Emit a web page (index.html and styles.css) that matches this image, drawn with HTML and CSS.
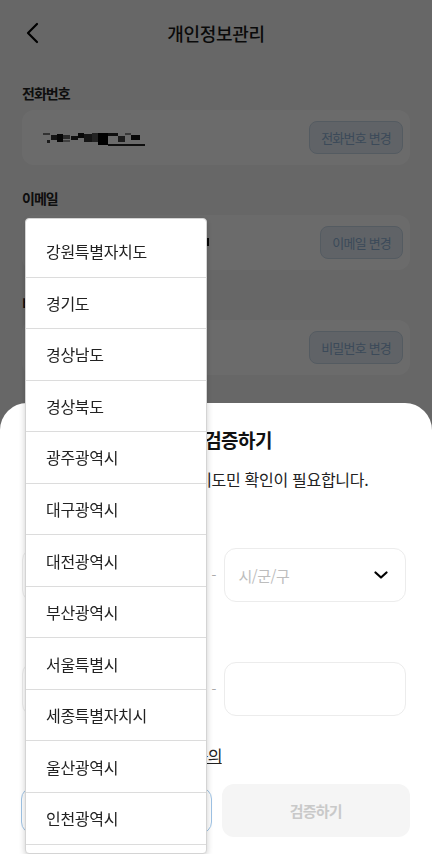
FILE: index.html
```html
<!DOCTYPE html>
<html lang="ko">
<head>
    <meta charset="UTF-8">
    <meta name="viewport" content="width=device-width, initial-scale=1.0">
    <title>개인정보관리</title>
    <link rel="stylesheet" href="styles.css">
</head>
<body>
    <div class="page">
        <header class="topbar">
            <svg class="back" width="14" height="22" viewBox="0 0 14 22"><path d="M11 2 L2 11 L11 20" fill="none" stroke="#000" stroke-width="2.2" stroke-linecap="round" stroke-linejoin="round"/></svg>
            <h1>개인정보관리</h1>
        </header>

        <section class="field">
            <div class="field-label">전화번호</div>
            <div class="card">
                <svg class="masked" width="104" height="16" viewBox="0 0 104 16">
                    <rect x="0" y="3" width="7" height="2" fill="#777"/>
                    <rect x="4" y="10" width="3" height="3" fill="#444"/>
                    <rect x="8" y="5" width="6" height="5" fill="#333"/>
                    <rect x="14" y="4" width="6" height="8" fill="#111"/>
                    <rect x="20" y="5" width="7" height="4" fill="#666"/>
                    <rect x="20" y="10" width="7" height="2" fill="#999"/>
                    <rect x="28" y="6" width="7" height="4" fill="#222"/>
                    <rect x="35" y="3" width="6" height="5" fill="#111"/>
                    <rect x="41" y="4" width="8" height="8" fill="#333"/>
                    <rect x="49" y="3" width="6" height="9" fill="#555"/>
                    <rect x="55" y="3" width="10" height="12" fill="#000"/>
                    <rect x="65" y="3" width="10" height="3" fill="#222"/>
                    <rect x="75" y="6" width="7" height="6" fill="#444"/>
                    <rect x="82" y="3" width="6" height="2" fill="#888"/>
                    <rect x="88" y="5" width="9" height="5" fill="#111"/>
                    <rect x="65" y="14" width="37" height="2" fill="#222"/>
                </svg>
                <button class="change-btn">전화번호 변경</button>
            </div>
        </section>

        <section class="field">
            <div class="field-label">이메일</div>
            <div class="card">
                <svg class="masked" width="168" height="16" viewBox="0 0 168 16">
                    <rect x="0" y="4" width="150" height="8" fill="#555"/>
                    <rect x="164" y="3" width="2" height="8" fill="#111"/>
                </svg>
                <button class="change-btn">이메일 변경</button>
            </div>
        </section>

        <section class="field">
            <div class="field-label">비밀번호</div>
            <div class="card">
                <span class="card-value">••••••••</span>
                <button class="change-btn">비밀번호 변경</button>
            </div>
        </section>
    </div>

    <div class="dim"></div>

    <div class="sheet">
        <h2 class="sheet-title">경기도민 거주지역주소 검증하기</h2>
        <p class="sheet-desc">서비스 이용을 위해서는 경기도민 확인이 필요합니다.</p>

        <div class="form-label">거주지</div>
        <div class="form-row">
            <div class="select">
                <span class="placeholder">시/도</span>
                <svg width="14" height="8" viewBox="0 0 14 8"><path d="M1.5 1.5 L7 6.5 L12.5 1.5" fill="none" stroke="#000" stroke-width="2.2" stroke-linecap="round" stroke-linejoin="round"/></svg>
            </div>
            <span class="dash">-</span>
            <div class="select">
                <span class="placeholder">시/군/구</span>
                <svg width="14" height="8" viewBox="0 0 14 8"><path d="M1.5 1.5 L7 6.5 L12.5 1.5" fill="none" stroke="#000" stroke-width="2.2" stroke-linecap="round" stroke-linejoin="round"/></svg>
            </div>
        </div>

        <div class="form-label">생년월일</div>
        <div class="form-row">
            <div class="select"><span class="placeholder">앞 6자리</span></div>
            <span class="dash">-</span>
            <div class="select"></div>
        </div>

        <a class="terms">개인정보 수집 및 이용약관 동의</a>

        <div class="actions">
            <button class="btn-cancel">취소</button>
            <button class="btn-submit" disabled>검증하기</button>
        </div>
    </div>

    <ul class="picker">
        <li>강원특별자치도</li>
        <li>경기도</li>
        <li>경상남도</li>
        <li>경상북도</li>
        <li>광주광역시</li>
        <li>대구광역시</li>
        <li>대전광역시</li>
        <li>부산광역시</li>
        <li>서울특별시</li>
        <li>세종특별자치시</li>
        <li>울산광역시</li>
        <li>인천광역시</li>
        <li>전라남도</li>
    </ul>
</body>
</html>
```

FILE: styles.css
```css
* {
    box-sizing: border-box;
}

body {
    margin: 0;
    width: 432px;
    height: 854px;
    overflow: hidden;
    font-family: "Noto Sans CJK KR", sans-serif;
    background-color: #f5f5f5;
    color: #222;
}

.page {
    padding: 0 22px;
}

.topbar {
    height: 66px;
    display: flex;
    align-items: center;
    justify-content: center;
    position: relative;
}

.topbar .back {
    position: absolute;
    left: 4px;
    top: 22px;
}

.topbar h1 {
    margin: 0;
    font-size: 18px;
    font-weight: 500;
    letter-spacing: -0.3px;
    color: #1a1a1a;
}

.field {
    margin-top: 17px;
}

.field + .field {
    margin-top: 23px;
}

.field-label {
    font-size: 14px;
    line-height: 20px;
    font-weight: 700;
    letter-spacing: -1px;
    margin-bottom: 7px;
}

.card {
    height: 55px;
    background-color: #fff;
    border-radius: 12px;
    display: flex;
    align-items: center;
    justify-content: space-between;
    padding: 0 7px 0 21px;
}

.card-value {
    font-size: 15px;
    color: #222;
}

.change-btn {
    height: 33px;
    padding: 0 11px;
    border: 1px solid #c9d8e8;
    border-radius: 8px;
    background-color: #e4edf6;
    color: #8fb0d4;
    font-family: inherit;
    font-size: 13px;
    letter-spacing: -0.8px;
}

.dim {
    position: fixed;
    inset: 0;
    background-color: rgba(0, 0, 0, 0.58);
}

.sheet {
    position: fixed;
    left: 0;
    right: 0;
    top: 403px;
    bottom: 0;
    background-color: #fff;
    border-radius: 27px 27px 0 0;
    padding: 23px 26px 0 22px;
}

.sheet-title,
.sheet-desc,
.form-label,
.terms {
    padding-left: 4px;
}

.sheet-title {
    margin: 0;
    font-size: 19px;
    line-height: 28px;
    font-weight: 700;
    letter-spacing: -0.6px;
    color: #111;
}

.sheet-desc {
    margin: 14px 0 0;
    font-size: 16px;
    line-height: 22px;
    letter-spacing: -0.3px;
    color: #222;
}

.form-label {
    margin-top: 26px;
    font-size: 14px;
    line-height: 20px;
    font-weight: 700;
    letter-spacing: -1px;
    margin-bottom: 12px;
}

.form-row + .form-label {
    margin-top: 28px;
}

.form-row {
    display: flex;
    align-items: center;
    height: 54px;
}

.select {
    flex: 1;
    height: 54px;
    border: 1px solid #ececec;
    border-radius: 12px;
    display: flex;
    align-items: center;
    justify-content: space-between;
    padding: 0 17px 0 14px;
}

.placeholder {
    font-size: 15px;
    color: #bdbdbd;
    letter-spacing: -0.5px;
}

.dash {
    width: 19px;
    text-align: center;
    color: #aaa;
    font-size: 14px;
}

.terms {
    display: block;
    margin-top: 28px;
    font-size: 16px;
    line-height: 22px;
    letter-spacing: -0.8px;
    color: #222;
    text-decoration: underline;
}

.actions {
    display: flex;
    align-items: center;
    gap: 10px;
    margin: 18px -4px 0 -1px;
}

.actions button {
    flex: 1;
    height: 53px;
    border-radius: 12px;
    font-family: inherit;
    font-size: 15px;
    font-weight: 700;
    letter-spacing: -0.8px;
}

.actions .btn-cancel {
    height: 47px;
    background-color: #fff;
    border: 1px solid #9fc4e6;
    color: #333;
}

.btn-submit {
    background-color: #f5f5f5;
    border: none;
    color: #c9c9c9;
}

.picker {
    position: fixed;
    left: 25px;
    top: 218px;
    width: 182px;
    height: 636px;
    margin: 0;
    padding: 7px 0 0;
    list-style: none;
    overflow: hidden;
    background-color: #fff;
    border: 1px solid #d4d4d4;
    border-radius: 4px;
    box-shadow: 0 2px 6px rgba(0, 0, 0, 0.2);
}

.picker li {
    height: 51.55px;
    display: flex;
    align-items: center;
    padding-left: 20px;
    border-bottom: 1px solid #dcdcdc;
    font-size: 16px;
    letter-spacing: -0.3px;
    color: #222;
}
```
